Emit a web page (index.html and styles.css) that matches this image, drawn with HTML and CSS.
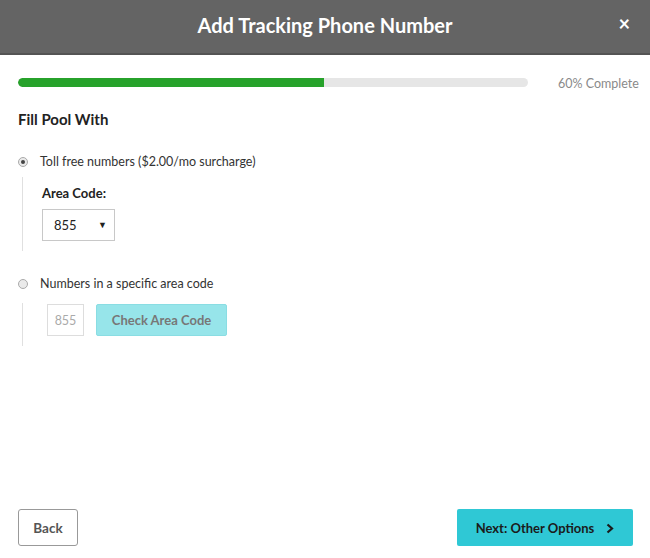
FILE: index.html
```html
<!DOCTYPE html>
<html>
<head>
<meta charset="utf-8">
<link rel="stylesheet" href="styles.css">
</head>
<body>
<div class="modal">
  <header class="modal-header">
    <h1 class="modal-title">Add Tracking Phone Number</h1>
    <span class="close">×</span>
  </header>
  <div class="modal-body">
    <div class="progress-row">
      <div class="progress"><div class="progress-fill" style="width:60%"></div></div>
      <span class="progress-label">60% Complete</span>
    </div>
    <h2 class="section-title">Fill Pool With</h2>
    <label class="radio-row">
      <span class="radio checked"></span>
      <span class="radio-text">Toll free numbers ($2.00/mo surcharge)</span>
    </label>
    <div class="sub">
      <div class="field-label">Area Code:</div>
      <div class="select"><span>855</span><span class="caret">▼</span></div>
    </div>
    <label class="radio-row second">
      <span class="radio"></span>
      <span class="radio-text">Numbers in a specific area code</span>
    </label>
    <div class="sub sub2">
      <div class="inline">
        <div class="code-input">855</div>
        <div class="check-btn">Check Area Code</div>
      </div>
    </div>
  </div>
  <footer class="modal-footer">
    <div class="btn-back">Back</div>
    <div class="btn-next">Next: Other Options <svg class="chev" width="8" height="11" viewBox="0 0 8 11"><path d="M1.5 1.5 L6 5.5 L1.5 9.5" fill="none" stroke="#1b1b1b" stroke-width="2.2"/></svg></div>
  </footer>
</div>
</body>
</html>
```
FILE: styles.css
```css
* { box-sizing: border-box; }
html, body { margin: 0; padding: 0; background: #fff; }
body { font-family: "Lato", "Open Sans", sans-serif; color: #333; }
.modal { width: 650px; height: 558px; display: flex; flex-direction: column; }
.modal-header {
  height: 55px; background: #646464; border-bottom: 2px solid #545454;
  display: flex; align-items: center; justify-content: center; position: relative;
  padding-bottom: 4px;
}
.modal-title { margin: 0; font-size: 20px; font-weight: 700; color: #fff; letter-spacing: 0; }
.close { position: absolute; right: 20px; top: 11px; color: #fff; font-size: 20px; font-weight: 700; }
.modal-body { padding: 22px 18px 0 18px; flex: 1; }
.progress-row { display: flex; align-items: center; height: 10px; }
.progress { flex: 0 0 510px; height: 9px; background: #e6e6e6; border-radius: 5px; overflow: hidden; }
.progress-fill { height: 100%; background: #27a22b; border-radius: 5px 0 0 5px; }
.progress-label { margin-left: 30px; font-size: 12.5px; color: #8a8a8a; margin-top: 2px; white-space: nowrap; }
.section-title { margin: 23px 0 0 0; font-size: 15px; font-weight: 700; color: #222; }
.radio-row { display: flex; align-items: center; margin-top: 26px; }
.radio-row.second { margin-top: 25px; }
.radio { width: 10px; height: 10px; border-radius: 50%; border: 1px solid #aaa; background: #eaeaea; margin-right: 12px; position: relative; }
.radio.checked::after { content: ""; position: absolute; left: 2px; top: 2px; width: 4px; height: 4px; border-radius: 50%; background: #444; }
.radio-text { font-size: 12.5px; color: #333; }
.sub { margin: 8px 0 0 4px; border-left: 1px solid #e0e0e0; padding: 8px 0 10px 19px; }
.field-label { font-size: 13px; font-weight: 700; color: #222; }
.select { margin-top: 8px; width: 73px; height: 32px; border: 1px solid #c8c8c8; display: flex; align-items: center; justify-content: space-between; padding: 0 7px 0 11px; font-size: 13px; color: #222; }
.caret { font-size: 9px; color: #222; margin-top: -1px; }
.sub2 { padding: 1px 0 10px 24px; margin-top: 12px; }
.inline { display: flex; gap: 12px; }
.code-input { width: 37px; height: 32px; border: 1px solid #ddd; color: #aaa; font-size: 12.5px; display: flex; align-items: center; justify-content: center; }
.check-btn { width: 131px; height: 32px; background: #97e5ea; border: 1px solid #8adde3; border-radius: 2px; color: #777; font-weight: 700; font-size: 13px; display: flex; align-items: center; justify-content: center; }
.modal-footer { display: flex; justify-content: space-between; align-items: center; padding: 0 17px 12px 18px; }
.btn-back { width: 60px; height: 37px; border: 1px solid #999; border-radius: 3px; display: flex; align-items: center; justify-content: center; font-size: 13.5px; font-weight: 700; color: #555; }
.btn-next { width: 176px; height: 37px; background: #2fc8d5; border-radius: 2px; display: flex; align-items: center; justify-content: center; gap: 12px; font-size: 13px; font-weight: 700; color: #1b1b1b; }
.chev { margin-top: 1px; }
```
